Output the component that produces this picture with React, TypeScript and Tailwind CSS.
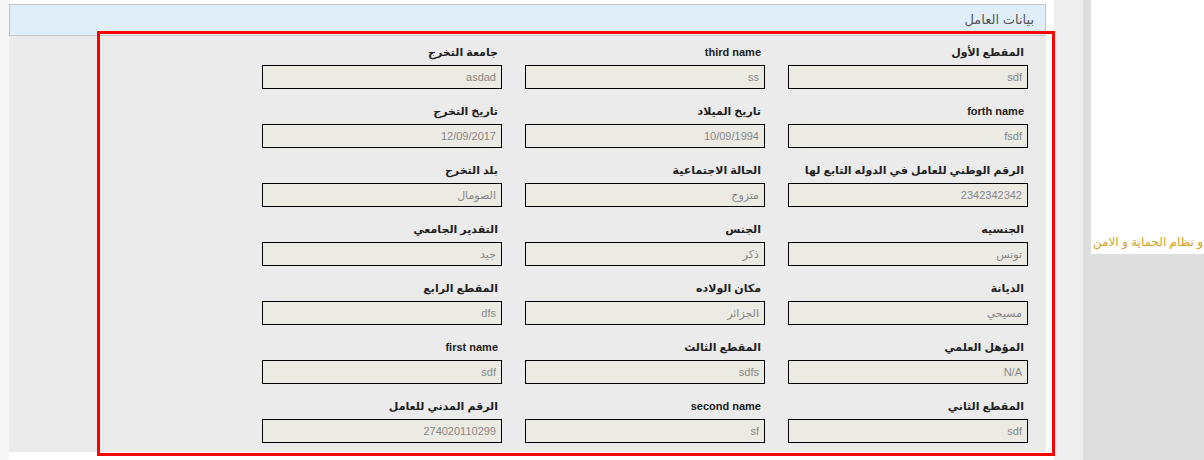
import React from 'react';

type Field = { label: string; value: string };

// rows in right-to-left order
const rows: Field[][] = [
  [
    { label: 'المقطع الأول', value: 'sdf' },
    { label: 'third name', value: 'ss' },
    { label: 'جامعة التخرج', value: 'asdad' },
  ],
  [
    { label: 'forth name', value: 'fsdf' },
    { label: 'تاريخ الميلاد', value: '10/09/1994' },
    { label: 'تاريخ التخرج', value: '12/09/2017' },
  ],
  [
    { label: 'الرقم الوطني للعامل في الدوله التابع لها', value: '2342342342' },
    { label: 'الحالة الاجتماعية', value: 'متزوج' },
    { label: 'بلد التخرج', value: 'الصومال' },
  ],
  [
    { label: 'الجنسيه', value: 'تونس' },
    { label: 'الجنس', value: 'ذكر' },
    { label: 'التقدير الجامعي', value: 'جيد' },
  ],
  [
    { label: 'الديانة', value: 'مسيحي' },
    { label: 'مكان الولاده', value: 'الجزائر' },
    { label: 'المقطع الرابع', value: 'dfs' },
  ],
  [
    { label: 'المؤهل العلمي', value: 'N/A' },
    { label: 'المقطع الثالث', value: 'sdfs' },
    { label: 'first name', value: 'sdf' },
  ],
  [
    { label: 'المقطع الثاني', value: 'sdf' },
    { label: 'second name', value: 'sf' },
    { label: 'الرقم المدني للعامل', value: '274020110299' },
  ],
];

function FormField({ label, value }: Field) {
  return (
    <div className="flex flex-col">
      <label className="h-4 pr-1 text-[11px] leading-4 font-bold text-[#222] whitespace-nowrap">
        {label}
      </label>
      <input
        readOnly
        value={value}
        className="mt-[5px] h-6 w-[240px] border border-black bg-[#ebeae3] px-[5px] text-right text-[11px] text-[#888] outline-none"
      />
    </div>
  );
}

export default function App() {
  return (
    <div className="relative flex h-[460px] w-[1204px] overflow-hidden bg-white font-['Liberation_Sans','DejaVu_Sans',sans-serif]">
      <div className="w-[9px] shrink-0 bg-[#f7f7f7]" />

      <div className="w-[1037px] shrink-0 pt-1" dir="rtl">
        <div className="flex h-8 items-center border border-[#c3c6c9] bg-[#e0eefa] pr-[11px] text-[13px] text-[#555]">
          بيانات العامل
        </div>
        <div className="bg-[#ebebeb] pt-2 pr-[18px] pb-[9px]">
          <div className="grid grid-cols-[240px_240px_240px] gap-x-[23px] gap-y-[14px]">
            {rows.flat().map((f, i) => (
              <FormField key={i} {...f} />
            ))}
          </div>
        </div>
      </div>

      <div className="w-2 shrink-0 bg-white" />
      <div className="w-[29px] shrink-0 bg-[#efefef]" />

      <div className="flex w-[121px] shrink-0 flex-col bg-[#dedede] pl-2">
        <div
          dir="rtl"
          className="flex h-[254px] items-end bg-white pr-px pb-[2px] text-[12px] leading-5 whitespace-nowrap text-[#d29f26]"
        >
          و نظام الحماية و الامن
        </div>
      </div>

      {/* annotation frame */}
      <div className="pointer-events-none absolute top-[31px] left-[97px] h-[425px] w-[958px] border-[3px] border-[#ff0000]" />
    </div>
  );
}
